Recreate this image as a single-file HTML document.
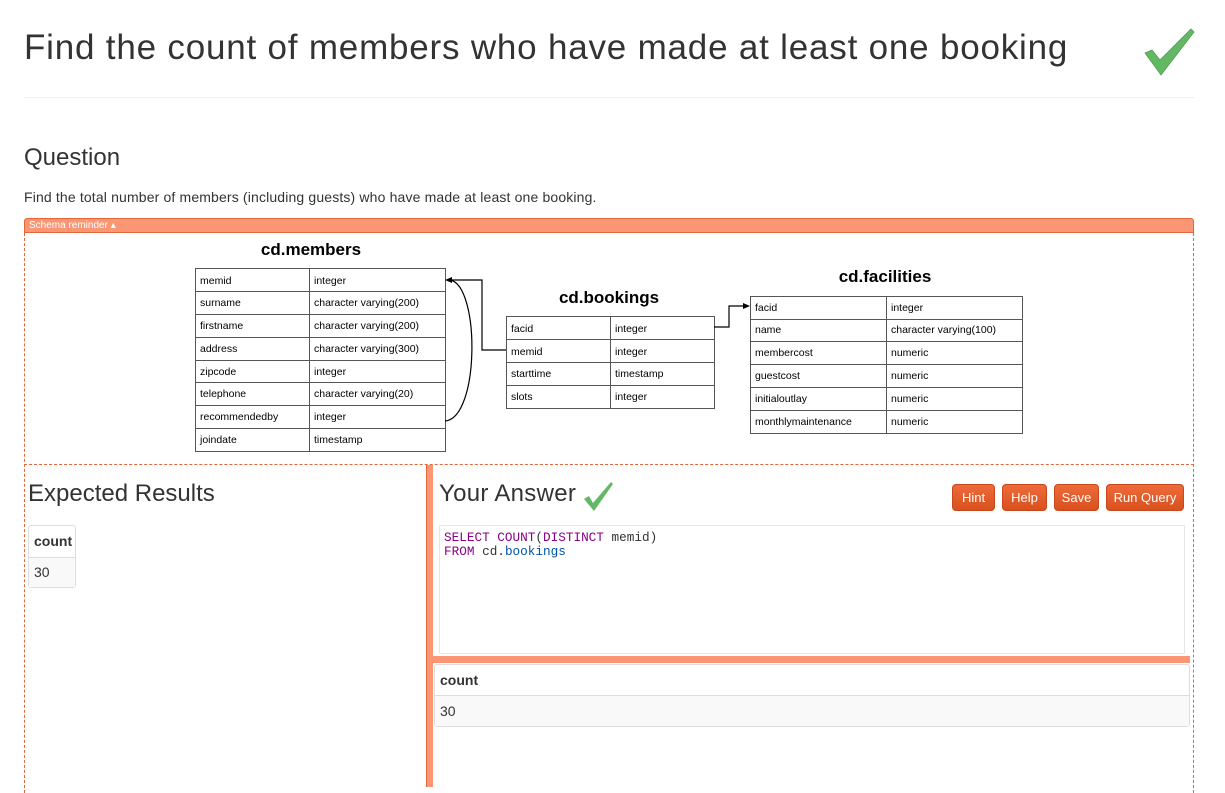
<!DOCTYPE html>
<html><head><meta charset="utf-8"><style>
*{box-sizing:border-box;margin:0;padding:0}
body{width:1225px;height:787px;overflow:hidden;background:#fff;font-family:"Liberation Sans",sans-serif;color:#333;position:relative}
.a{position:absolute}
h1{position:absolute;left:24px;top:28px;font-size:35px;font-weight:normal;color:#333;letter-spacing:0.8px}
.btn{position:absolute;top:484px;height:27px;border:1px solid #c9481b;border-radius:4px;color:#fff;font-size:13px;text-align:center;line-height:25px;background:linear-gradient(#ee6c3a,#d8501e)}
.code{font-family:"Liberation Mono",monospace;font-size:12.7px;line-height:14px}
</style></head><body>
<h1>Find the count of members who have made at least one booking</h1>
<svg class="a" style="left:1140px;top:25px" width="60" height="55"><polygon points="5,28 12,25 20,35 51,4 54,7 21,50" fill="#63b864" stroke="#4f9e50" stroke-width="0.8"/></svg>
<div class="a" style="left:24px;top:97px;width:1170px;height:1px;background:#eee"></div>
<div class="a" style="left:24px;top:144px;font-size:24px">Question</div>
<div class="a" style="left:24px;top:189px;font-size:14px;letter-spacing:0.15px">Find the total number of members (including guests) who have made at least one booking.</div>
<div class="a" style="left:24px;top:218px;width:1170px;height:15px;background:#fa9673;border:1px solid #e2673a;border-radius:3px 3px 0 0;color:#fff;font-size:10px;line-height:13px;padding-left:4px">Schema reminder ▴</div>
<div class="a" style="left:24px;top:233px;width:1170px;height:560px;border-left:1px dashed #e2673a;border-right:1px dashed #e2673a"></div>
<div class="a" style="left:24px;top:464px;width:1170px;height:1px;border-top:1px dashed #e2673a"></div>
<svg class="a" style="left:0;top:0" width="1225" height="470" font-family="Liberation Sans,sans-serif" font-size="10.5" fill="#000">
<g stroke="#555" fill="none"><rect x="195.5" y="268.5" width="250" height="183"/><line x1="309.5" y1="268" x2="309.5" y2="451"/>
<rect x="506.5" y="316.5" width="208" height="92"/><line x1="610.5" y1="316" x2="610.5" y2="408"/>
<rect x="750.5" y="296.5" width="272" height="137"/><line x1="886.5" y1="296" x2="886.5" y2="433"/>
<path d="M196 291.5H445M196 314.5H445M196 337.5H445M196 360.5H445M196 382.5H445M196 405.5H445M196 428.5H445"/>
<path d="M507 339.5H714M507 362.5H714M507 385.5H714"/>
<path d="M751 319.5H1022M751 341.5H1022M751 364.5H1022M751 387.5H1022M751 410.5H1022"/>
</g>
<g stroke="#000" fill="none" stroke-width="1.2"><path d="M506 350H482V280H450"/><path d="M445 421C480 418 480 285 450 280"/><path d="M714 327H729V306H745"/></g>
<polygon points="445,280 452,277 452,283" /><polygon points="750,306 743,303 743,309"/>
<g font-weight="bold" font-size="17" text-anchor="middle"><text x="311" y="255">cd.members</text><text x="609" y="303">cd.bookings</text><text x="885" y="282">cd.facilities</text></g>
<g><text x="200" y="284">memid</text><text x="314" y="284">integer</text>
<text x="200" y="306">surname</text><text x="314" y="306">character varying(200)</text>
<text x="200" y="329">firstname</text><text x="314" y="329">character varying(200)</text>
<text x="200" y="352">address</text><text x="314" y="352">character varying(300)</text>
<text x="200" y="375">zipcode</text><text x="314" y="375">integer</text>
<text x="200" y="397">telephone</text><text x="314" y="397">character varying(20)</text>
<text x="200" y="420">recommendedby</text><text x="314" y="420">integer</text>
<text x="200" y="443">joindate</text><text x="314" y="443">timestamp</text>
<text x="511" y="332">facid</text><text x="615" y="332">integer</text>
<text x="511" y="355">memid</text><text x="615" y="355">integer</text>
<text x="511" y="377">starttime</text><text x="615" y="377">timestamp</text>
<text x="511" y="400">slots</text><text x="615" y="400">integer</text>
<text x="755" y="311">facid</text><text x="891" y="311">integer</text>
<text x="755" y="333">name</text><text x="891" y="333">character varying(100)</text>
<text x="755" y="356">membercost</text><text x="891" y="356">numeric</text>
<text x="755" y="379">guestcost</text><text x="891" y="379">numeric</text>
<text x="755" y="402">initialoutlay</text><text x="891" y="402">numeric</text>
<text x="755" y="425">monthlymaintenance</text><text x="891" y="425">numeric</text></g>
</svg>
<div class="a" style="left:426px;top:465px;width:7px;height:322px;background:#fa9673;border-left:1px solid #e2673a"></div>
<div class="a" style="left:28px;top:480px;font-size:24px">Expected Results</div>
<div class="a" style="left:28px;top:525px;width:48px;height:63px;border:1px solid #ddd;border-radius:3px;font-size:14px">
<div style="height:32px;line-height:31px;padding-left:5px;font-weight:bold;border-bottom:1px solid #ddd">count</div>
<div style="height:29px;line-height:29px;padding-left:5px;background:#f9f9f9">30</div></div>
<div class="a" style="left:439px;top:480px;font-size:24px;letter-spacing:0.3px">Your Answer</div>
<svg class="a" style="left:582px;top:481px" width="32" height="32"><polygon points="2,18 7,15 11,22 29,1 31,3 12,30" fill="#63b864"/></svg>
<div class="btn" style="left:952px;width:43px">Hint</div>
<div class="btn" style="left:1002px;width:45px">Help</div>
<div class="btn" style="left:1054px;width:45px">Save</div>
<div class="btn" style="left:1106px;width:78px">Run Query</div>
<div class="a code" style="left:439px;top:525px;width:746px;height:129px;border:1px solid #e6e6e6;padding:5px 4px">
<span style="color:#808">SELECT COUNT</span>(<span style="color:#808">DISTINCT</span> memid)<br><span style="color:#808">FROM</span> cd.<span style="color:#05a">bookings</span></div>
<div class="a" style="left:433px;top:656px;width:757px;height:7px;background:#fa9673"></div>
<div class="a" style="left:434px;top:664px;width:756px;height:63px;border:1px solid #ddd;border-radius:3px;font-size:14px">
<div style="height:31px;line-height:31px;padding-left:5px;font-weight:bold;border-bottom:1px solid #ddd">count</div>
<div style="height:30px;line-height:30px;padding-left:5px;background:#f9f9f9">30</div></div>
</body></html>
